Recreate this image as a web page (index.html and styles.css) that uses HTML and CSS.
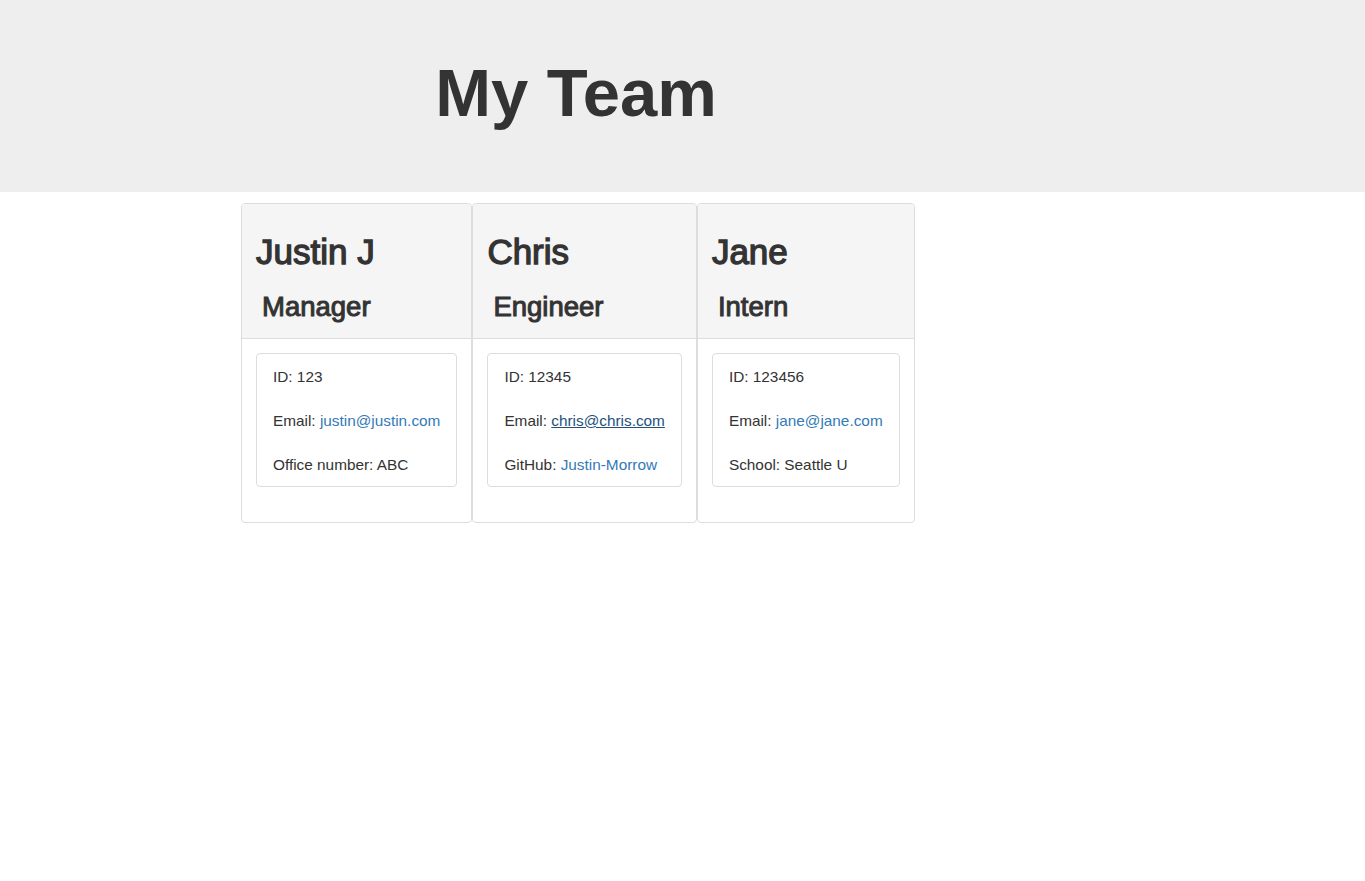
FILE: index.html
```html
<!DOCTYPE html>
<html lang="en">
<head>
<meta charset="utf-8">
<title>My Team</title>
<link rel="stylesheet" href="styles.css">
</head>
<body>
<header class="jumbotron">
  <div class="wrap">
    <h1 class="title">My Team</h1>
  </div>
</header>
<main class="wrap">
  <div class="cards">
    <section class="card">
      <div class="card-head">
        <h2 class="name">Justin J</h2>
        <h3 class="role">Manager</h3>
      </div>
      <div class="card-body">
        <ul class="info">
          <li>ID: 123</li>
          <li>Email: <a href="#">justin@justin.com</a></li>
          <li>Office number: ABC</li>
        </ul>
      </div>
    </section>
    <section class="card">
      <div class="card-head">
        <h2 class="name">Chris</h2>
        <h3 class="role">Engineer</h3>
      </div>
      <div class="card-body">
        <ul class="info">
          <li>ID: 12345</li>
          <li>Email: <a href="#" class="active">chris@chris.com</a></li>
          <li>GitHub: <a href="#">Justin-Morrow</a></li>
        </ul>
      </div>
    </section>
    <section class="card">
      <div class="card-head">
        <h2 class="name">Jane</h2>
        <h3 class="role">Intern</h3>
      </div>
      <div class="card-body">
        <ul class="info">
          <li>ID: 123456</li>
          <li>Email: <a href="#">jane@jane.com</a></li>
          <li>School: Seattle U</li>
        </ul>
      </div>
    </section>
  </div>
</main>
</body>
</html>
```
FILE: styles.css
```css
* { box-sizing: border-box; }
html, body { margin: 0; padding: 0; }
body {
  font-family: "Liberation Sans", Arial, sans-serif;
  color: #333;
  background: #fff;
  font-size: 15.35px;
}
.jumbotron {
  background: #eee;
  height: 192px;
  padding-top: 55px;
}
.wrap {
  margin-left: 241px;
  width: 670px;
}
.title {
  margin: 0;
  text-align: center;
  font-size: 67px;
  line-height: 75px;
  font-weight: bold;
}
.cards {
  display: flex;
  align-items: flex-start;
  margin-top: 11px;
}
.card {
  border: 1px solid #ddd;
  border-radius: 4px;
  background: #fff;
}
.card-head {
  background: #f5f5f5;
  border-bottom: 1px solid #ddd;
  border-radius: 3px 3px 0 0;
  padding: 28px 14px 14px 14px;
}
.name {
  margin: 0;
  font-size: 35px;
  line-height: 40px;
  font-weight: normal;
  -webkit-text-stroke: 1.3px #333;
}
.role {
  margin: 18px 0 0 0;
  padding-left: 6px;
  font-size: 27.5px;
  line-height: 34px;
  font-weight: normal;
  -webkit-text-stroke: 1px #333;
}
.card-body {
  padding: 14px 14px 15px 14px;
}
.info {
  list-style: none;
  margin: 0 0 20px 0;
  padding: 0;
  border: 1px solid #ddd;
  border-radius: 4px;
}
.info li {
  padding: 13px 16px 11px 16px;
  line-height: 20px;
  white-space: nowrap;
}
.info a {
  color: #337ab7;
  text-decoration: none;
}
.info a.active {
  color: #23527c;
  text-decoration: underline;
}
```
